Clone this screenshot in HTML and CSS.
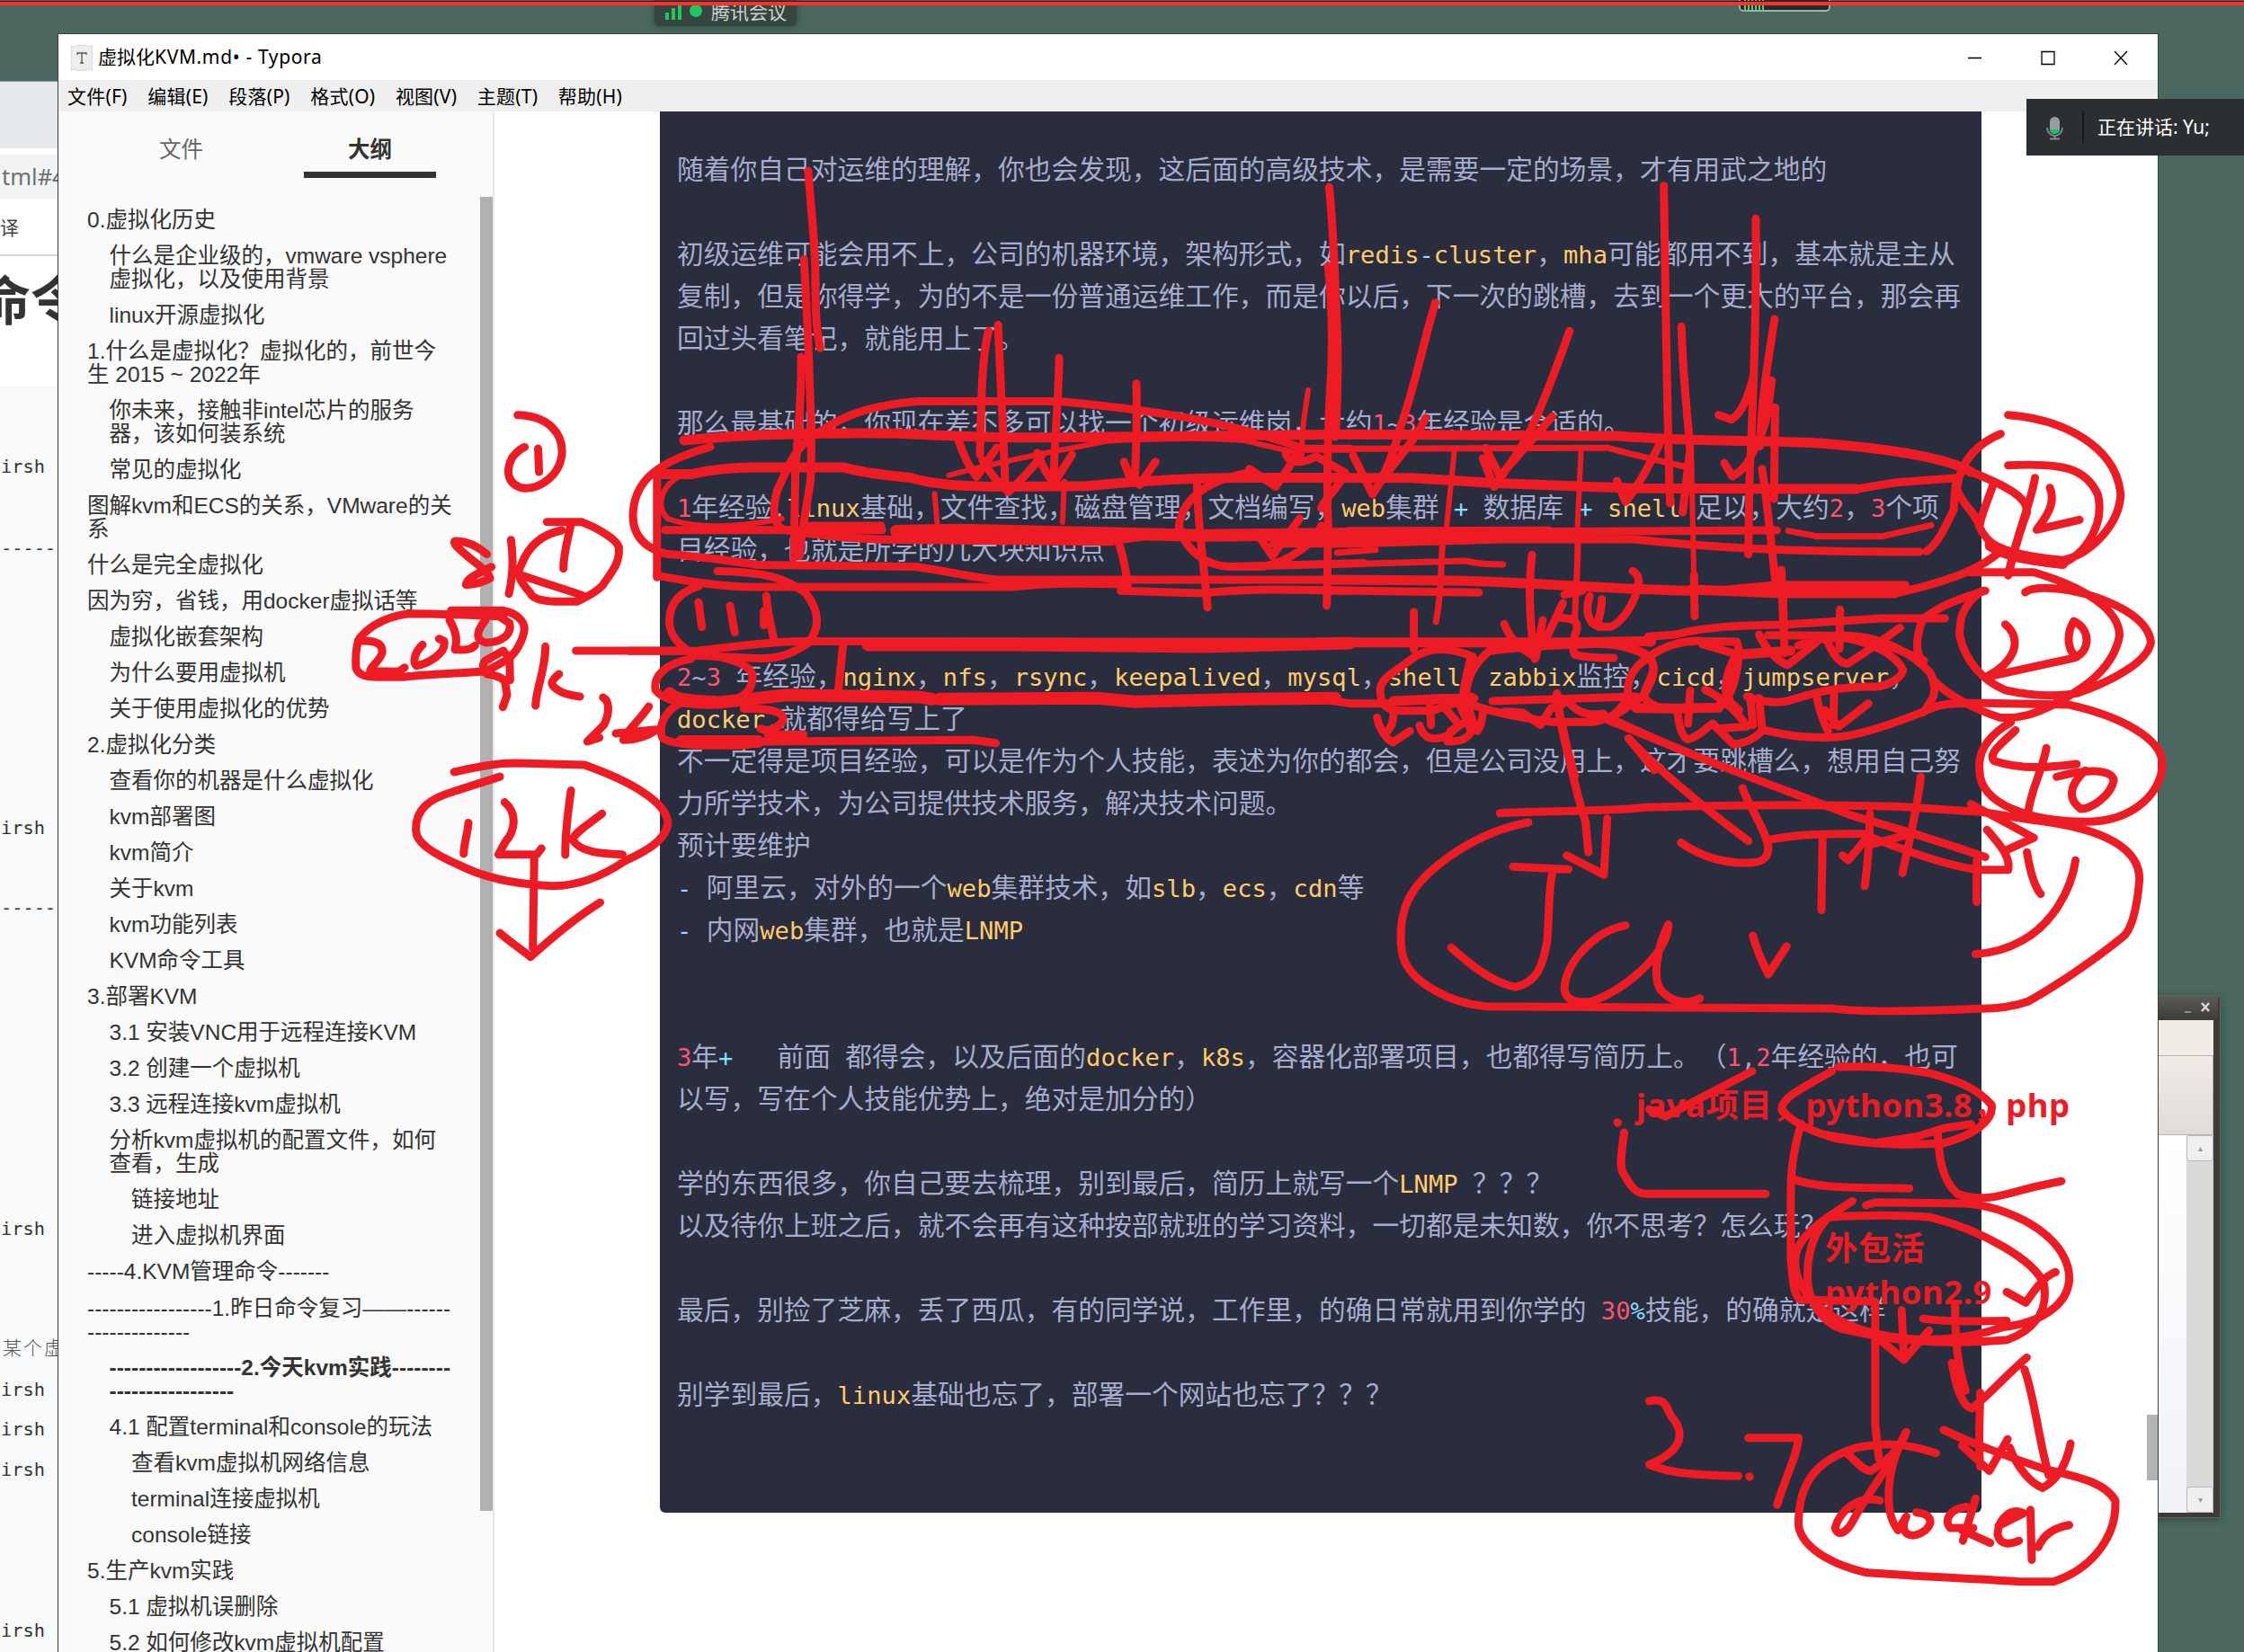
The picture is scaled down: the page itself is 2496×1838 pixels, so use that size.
FILE: index.html
```html
<!DOCTYPE html>
<html lang="zh-CN">
<head>
<meta charset="utf-8">
<title>虚拟化KVM.md - Typora</title>
<link rel="stylesheet" href="styles.css">
</head>
<body>
<div class="desktop">

  <section class="browser">
    <div class="browser-tabs"></div>
    <div class="browser-address">tml#4</div>
    <div class="browser-bookmarks">译</div>
    <div class="browser-title">命令</div>
    <div class="browser-code">
      <p>irsh</p><p>-----</p><p>irsh</p><p>-----</p><p>irsh</p><p class="note">某个虚</p><p>irsh</p><p>irsh</p><p>irsh</p><p>irsh</p>
    </div>
  </section>

  <section class="remote">
    <div class="remote-title">
      <svg width="40" height="26" viewBox="0 0 40 26"><path d="M3 18h7" stroke="#8b8a84" stroke-width="2"/><path d="M22 8l8 9M30 8l-8 9" stroke="#dad8d0" stroke-width="2.6"/></svg>
    </div>
    <div class="remote-body">
      <div class="remote-menu"></div>
      <div class="remote-tools"></div>
      <div class="remote-view">
        <div class="remote-page"></div>
        <div class="remote-scroll"><span class="step">▴</span><span class="step">▾</span></div>
      </div>
    </div>
  </section>

  <section class="typora">
    <header class="titlebar">
      <svg class="app-icon" width="28" height="36" viewBox="0 0 28 36"><path d="M2 5l4 1 4-2 4 1 4-1 4 2 4-1-1 5 1 5-1 4 1 4-1 4 1 5-4-1-4 2-4-1-4 1-4-2-4 1 1-5-1-4 1-4-1-4 1-5z" fill="#eee" stroke="#d8d8d8"/><path d="M9 15v-2h10v2M14 13v11M12 24h4" fill="none" stroke="#555" stroke-width="1.3"/></svg>
      <span class="doc-name">虚拟化<span class="latin">KVM.md• - Typora</span></span>
      <svg class="controls" width="180" height="18" viewBox="0 0 180 18" fill="none" stroke="#000" stroke-width="1.3"><path d="M1 9.5h15M83 2.5h14v14h-14zM164 2l14 15M178 2l-14 15"/></svg>
    </header>
    <nav class="menubar"><span>文件(F)</span><span>编辑(E)</span><span>段落(P)</span><span>格式(O)</span><span>视图(V)</span><span>主题(T)</span><span>帮助(H)</span></nav>
    <div class="workspace">
      <aside class="sidebar">
        <div class="tabs"><span>文件</span><span class="active">大纲</span></div>
        <div class="outline-scroll">
          <ul class="outline">
            <li>0.虚拟化历史</li>
            <li class="l2">什么是企业级的，vmware vsphere<br>虚拟化，以及使用背景</li>
            <li class="l2">linux开源虚拟化</li>
            <li>1.什么是虚拟化？虚拟化的，前世今<br>生 2015 ~ 2022年</li>
            <li class="l2">你未来，接触非intel芯片的服务<br>器，该如何装系统</li>
            <li class="l2">常见的虚拟化</li>
            <li>图解kvm和ECS的关系，VMware的关<br>系</li>
            <li>什么是完全虚拟化</li>
            <li>因为穷，省钱，用docker虚拟话等</li>
            <li class="l2">虚拟化嵌套架构</li>
            <li class="l2">为什么要用虚拟机</li>
            <li class="l2">关于使用虚拟化的优势</li>
            <li>2.虚拟化分类</li>
            <li class="l2">查看你的机器是什么虚拟化</li>
            <li class="l2">kvm部署图</li>
            <li class="l2">kvm简介</li>
            <li class="l2">关于kvm</li>
            <li class="l2">kvm功能列表</li>
            <li class="l2">KVM命令工具</li>
            <li>3.部署KVM</li>
            <li class="l2">3.1 安装VNC用于远程连接KVM</li>
            <li class="l2">3.2 创建一个虚拟机</li>
            <li class="l2">3.3 远程连接kvm虚拟机</li>
            <li class="l2">分析kvm虚拟机的配置文件，如何<br>查看，生成</li>
            <li class="l3">链接地址</li>
            <li class="l3">进入虚拟机界面</li>
            <li>-----4.KVM管理命令-------</li>
            <li>-----------------1.昨日命令复习——------<br>--------------</li>
            <li class="l2 current">------------------2.今天kvm实践--------<br>-----------------</li>
            <li class="l2">4.1 配置terminal和console的玩法</li>
            <li class="l3">查看kvm虚拟机网络信息</li>
            <li class="l3">terminal连接虚拟机</li>
            <li class="l3">console链接</li>
            <li>5.生产kvm实践</li>
            <li class="l2">5.1 虚拟机误删除</li>
            <li class="l2">5.2 如何修改kvm虚拟机配置</li>
          </ul>
          <div class="outline-thumb"></div>
        </div>
      </aside>
      <main class="editor">
        <pre class="code">随着你自己对运维的理解，你也会发现，这后面的高级技术，是需要一定的场景，才有用武之地的

初级运维可能会用不上，公司的机器环境，架构形式，如<b>redis</b><u>-</u><b>cluster</b>，<b>mha</b>可能都用不到，基本就是主从
复制，但是你得学，为的不是一份普通运维工作，而是你以后，下一次的跳槽，去到一个更大的平台，那会再
回过头看笔记，就能用上了。

那么最基础的，你现在差不多可以找一个初级运维岗，大约<i>1</i><s>~</s><i>3</i>年经验是合适的。

<i>1</i>年经验<s>,</s><b>linux</b>基础，文件查找，磁盘管理，文档编写，<b>web</b>集群<u> + </u>数据库<u> + </u><b>shell </b>足以，大约<i>2</i>，<i>3</i>个项
目经验，也就是所学的几大块知识点


<i>2</i><s>~</s><i>3 </i>年经验，<b>nginx</b>，<b>nfs</b>，<b>rsync</b>，<b>keepalived</b>，<b>mysql</b>，<b>shell</b>，<b>zabbix</b>监控，<b>cicd</b>，<b>jumpserver</b>，
<b>docker</b><s>,</s>就都得给写上了
不一定得是项目经验，可以是作为个人技能，表述为你的都会，但是公司没用上，这才要跳槽么，想用自己努
力所学技术，为公司提供技术服务，解决技术问题。
预计要维护
<u>- </u>阿里云，对外的一个<b>web</b>集群技术，如<b>slb</b>，<b>ecs</b>，<b>cdn</b>等
<u>- </u>内网<b>web</b>集群，也就是<b>LNMP</b>


<i>3</i>年<u>+   </u>前面<s> </s>都得会，以及后面的<b>docker</b>，<b>k8s</b>，容器化部署项目，也都得写简历上。（<i>1</i><s>,</s><i>2</i>年经验的，也可
以写，写在个人技能优势上，绝对是加分的）

学的东西很多，你自己要去梳理，别到最后，简历上就写一个<b>LNMP </b>？？？
以及待你上班之后，就不会再有这种按部就班的学习资料，一切都是未知数，你不思考？怎么玩？

最后，别捡了芝麻，丢了西瓜，有的同学说，工作里，的确日常就用到你学的<s> </s><i>30</i><u>%</u>技能，的确就是这样

别学到最后，<b>linux</b>基础也忘了，部署一个网站也忘了？？？</pre>
        <div class="editor-thumb"></div>
      </main>
    </div>
  </section>

  <div class="meeting">
    <svg width="52" height="24" viewBox="0 0 52 24" fill="#22c55e"><path d="M1 14h4v8H1zM8 9h4v13H8zM15 4h4v18h-4z"/><circle cx="35" cy="12" r="7"/></svg>
    <span>腾讯会议</span>
  </div>
  <div class="level"></div>
  <div class="share-line"></div>

  <div class="speaker">
    <svg width="26" height="42" viewBox="0 0 26 42"><rect x="8" y="9" width="11" height="19" rx="5.5" fill="#999c9f"/><path d="M8 23h11a5.5 5 0 0 1-11 0z" fill="#12c463"/><path d="M5 21a8.500 9 0 0 0 17 0M13.500 30v3M8 33.500h11" fill="none" stroke="#85898c" stroke-width="1.800"/></svg>
    <span class="rule"></span>
    <span class="who">正在讲话: Yu;</span>
  </div>

  <div class="ink-note note-top">java项目，python3.8，php</div>
  <div class="ink-note note-low">外包活<br>python2.9</div>

  <svg class="ink" viewBox="0 0 2496 1838">
    <g transform="scale(.53061 .39541)">
      <path d="M1085 1168C1150 1170 1180 1220 1178 1275C1175 1340 1130 1375 1100 1374C1060 1365 1060 1320 1075 1285Q1090 1262 1100 1258M1128 1262L1130 1328"/>
    </g>
    <g transform="translate(360 560) scale(.33333)">
      <path d="M545 170C510 140 470 125 438 126C430 135 450 150 490 185C530 215 550 235 555 250C530 265 500 270 475 272C475 255 500 240 560 212M625 122C635 190 630 250 618 302"/>
      <path d="M745 62L860 62C920 85 975 120 985 145C990 200 960 230 930 275C900 305 870 315 845 328L770 328C720 325 695 315 690 300C655 260 640 235 660 205C680 150 720 105 795 90M660 240C730 265 800 285 865 308M825 70C815 120 800 170 800 218"/>
      <path d="M425 358L600 358C640 365 670 390 670 420C665 460 640 500 615 520L545 560C450 568 350 570 265 580L190 580C150 578 120 580 108 550C105 500 110 470 120 450C160 400 230 372 290 368C400 368 520 375 600 378M430 370L600 362"/>
      <path d="M115 458C160 458 200 460 195 500C185 530 155 545 155 560L250 562L270 548M330 472C305 495 295 530 310 542C350 535 410 500 402 460L385 452M420 390C445 430 445 465 438 488C470 490 490 490 505 475M540 390C515 420 500 455 540 465C590 465 630 440 620 400L590 380"/>
      <path d="M600 492L540 525C525 540 535 560 545 570C580 575 600 585 605 595L612 640L598 680M620 510L622 590M600 495L620 515M740 478C740 560 710 610 707 675M785 570C755 595 755 605 780 622C800 638 830 642 855 645M842 492L1190 492"/>
      <path d="M932 648C955 660 955 700 935 740L880 795L920 782M1085 678C1050 730 1010 760 1000 790C1040 790 1090 775 1110 755L975 768"/>
    </g>
    <g transform="translate(0 600) scale(.53061 .39541)">
      <path d="M952 655C1000 640 1050 630 1080 630L1225 635C1320 680 1400 740 1400 800C1395 850 1350 880 1310 905C1250 960 1200 978 1150 975C1080 970 1010 950 960 915C900 880 872 850 872 820C870 760 900 730 950 710L1048 668"/>
      <path d="M982 798C980 830 972 860 972 885M1058 740C1085 770 1080 820 1060 850L1045 887L1125 887L1135 870M1197 707C1190 770 1185 840 1185 888M1262 772C1235 800 1205 825 1200 845C1215 880 1260 885 1305 887M1120 895L1117 1150M1048 1108C1075 1140 1100 1160 1112 1175C1150 1130 1200 1070 1258 1022"/>
    </g>
    <g transform="translate(700 150) scale(.53061 .39541)">
      <path d="M375 102C380 200 388 280 390 380C390 460 390 540 400 600M366 350C370 450 375 550 378 700C382 800 382 900 380 970C372 1050 362 1100 357 1185M360 625C362 750 352 850 348 950L345 1190"/>
      <path d="M753 552C740 620 738 720 735 900M773 535C778 700 785 850 788 990M690 860C700 900 715 940 728 962L770 880M740 915C760 960 780 990 795 1005C830 960 850 930 865 900M901 628C900 750 890 870 890 970M855 895C865 930 880 965 890 980L928 900M1063 700C1065 800 1062 900 1060 960M1037 920L1048 960L1070 985L1103 920"/>
      <path class="fine" d="M1423 718C1418 770 1410 820 1410 870M100 965C60 1000 60 1050 80 1080C140 1110 230 1105 320 1080M640 1010L645 1090M912 975L908 1090M1485 1175L1560 1168"/>
      <path d="M1467 147C1475 250 1480 400 1485 600C1485 700 1485 760 1480 850M1465 370C1475 500 1475 620 1468 740C1465 850 1460 950 1465 1100L1462 1325"/>
      <path class="wide" d="M115 860C250 840 400 838 560 840C700 850 800 855 1000 850L1510 843M58 955L130 955C180 940 220 935 270 936L450 936C500 955 560 960 590 965C640 985 700 988 760 990L960 988C1100 970 1200 965 1300 965L1510 965"/>
      <path d="M170 878C60 920 20 970 10 1040C0 1110 20 1160 80 1180C180 1190 220 1200 270 1210L600 1215C680 1230 730 1250 780 1252L1510 1252M58 1245L58 955"/>
      <path d="M605 750C520 760 460 780 400 835C340 880 330 950 310 1000C300 1050 300 1090 320 1110C400 1130 500 1140 600 1140L1010 1145C1060 1130 1100 1125 1200 1125L1510 1125"/>
      <path d="M605 750L900 750C1100 775 1200 800 1300 835C1350 855 1390 870 1410 883L1510 883"/>
      <path class="fine" d="M670 958C800 910 900 890 1000 862C1150 850 1250 855 1290 860C1350 880 1390 890 1410 900"/>
      <path d="M75 1112L530 1112M370 1100L528 1100M58 1240C120 1255 180 1270 250 1272L800 1272C900 1260 960 1262 1045 1265C1040 1220 1035 1180 1025 1145M1030 1283L1200 1290C1300 1275 1400 1280 1510 1283M1190 965C1190 1100 1205 1200 1212 1330"/>
      <path class="bold" d="M560 1115L700 1112L1200 1127L1510 1123M500 1435L800 1435L1200 1440L1510 1430"/>
      <path d="M1300 950C1200 975 1160 1030 1152 1100C1165 1170 1210 1215 1260 1215L1330 1215C1380 1200 1440 1150 1450 1100M1260 1215L1540 1205M1300 940L1355 990L1400 900M1320 1130L1348 1185L1405 1080M1375 890C1380 930 1410 925 1440 905L1500 950C1490 990 1460 1020 1450 1050M1350 1150L1510 1150"/>
      <path d="M185 1228C290 1230 330 1250 370 1290C400 1340 400 1390 375 1430C330 1470 300 1475 270 1473L140 1465C90 1430 80 1390 85 1350C90 1310 110 1285 145 1270M145 1315L152 1385M211 1325L221 1400M287 1297C290 1350 300 1400 303 1420M282 1340L282 1380M0 1452L140 1452C220 1440 300 1425 360 1425L1510 1427"/>
    </g>
    <g transform="translate(700 700) scale(.53061 .35714)">
      <path d="M130 92C70 110 50 150 55 190C70 220 120 240 180 235C250 220 260 180 258 140C250 110 220 95 170 80M448 50L437 205M105 232C70 260 60 310 70 340C100 365 160 362 240 362L280 350L720 345L768 355M240 248C310 245 330 265 320 290C305 315 290 320 275 310M290 328L365 328"/>
      <path class="bold" d="M85 200C95 220 130 225 190 228L330 205L610 212L635 218M650 218L980 215L1060 226L1300 218L1480 215M110 350L270 350"/>
    </g>
    <g transform="translate(1500 150) scale(.63520 .33333)">
      <path d="M552 170C555 500 557 900 563 1230M713 280C715 600 708 900 702 1150L700 1400M583 640C585 800 592 900 598 1050L585 1260M746 615C735 750 725 850 720 1040M741 820C735 900 735 960 715 1030C700 1100 690 1120 672 1140L658 1095M710 800C700 870 690 930 670 950L648 935M747 910L745 1215M724 1115C735 1250 742 1400 748 1500"/>
      <path d="M152 560C130 700 115 850 90 980C80 1060 60 1150 42 1200L8 1070M135 945C115 1030 70 1110 42 1200M387 655C360 800 340 900 320 980C300 1060 270 1130 255 1175L235 1080M357 940L265 1140L240 1045M545 1030C520 1130 500 1190 485 1225L470 1155"/>
      <path class="wide" d="M0 1000L470 1005C600 1025 750 1020 830 1030C960 1050 1050 1080 1090 1125M0 1145L110 1145L250 1162L500 1180L890 1182"/>
      <path d="M1090 1125C1150 1170 1190 1210 1188 1260C1170 1350 1165 1400 1155 1470M890 1182L960 1160L1065 1145M0 1365L260 1350L500 1350C650 1380 750 1390 1000 1392M1065 1145C1060 1210 1060 1230 1060 1250C1045 1310 1030 1370 1012 1390"/>
      <path class="mid" d="M0 1048L455 1045C500 1070 550 1090 595 1110M770 1322L820 1340L935 1340L1020 1303"/>
      <path class="fine" d="M185 1060L170 1340M407 1060L400 1340M600 1050L605 1500"/>
      <path class="bold" d="M0 1330L350 1328M1125 1370C1150 1400 1180 1412 1250 1428"/>
      <path d="M300 1325L750 1320M1142 998C1090 1040 1070 1110 1065 1180C1075 1240 1100 1260 1105 1310C1120 1370 1150 1395 1170 1410L1250 1420C1300 1400 1350 1300 1352 1200C1345 1050 1260 950 1155 935M1155 1103C1250 1095 1290 1110 1312 1200C1325 1300 1290 1400 1250 1430C1200 1430 1160 1410 1125 1370M1130 1160C1120 1220 1105 1280 1105 1310M1202 1145C1195 1230 1170 1330 1155 1470M1228 1178C1240 1230 1220 1280 1205 1318L1280 1285"/>
    </g>
    <g transform="translate(1480 600) scale(.33333)">
      <path d="M0 15L560 0M0 170L495 178M780 185L840 172M672 52C660 150 660 250 682 400M580 283C590 315 610 340 640 365L685 395L708 270M775 213L720 330M765 262C810 265 825 270 822 300C810 330 805 370 815 385C850 397 900 395 945 396M865 190C850 230 855 280 895 292L935 292C975 275 1020 210 1028 140C1028 120 1015 110 1008 106M905 200C905 235 895 260 890 290M278 243L278 368"/>
      <path d="M475 392C400 360 330 355 270 400C220 440 170 460 166 500C165 550 180 570 235 572L340 572C380 560 410 545 480 530M540 372C620 360 750 355 850 350C960 345 1040 365 1070 400C1090 440 1070 480 1045 520C1000 550 970 590 875 610L740 610C640 595 560 585 450 545M450 530C455 470 470 420 535 368M540 540L1020 525M0 538L65 548L200 548"/>
      <path d="M155 595C165 640 190 670 208 678L265 640M210 580C210 610 200 630 190 640M332 550L335 620M297 622C310 665 340 675 390 655L430 620L375 555M430 550L470 640C455 670 430 675 390 675L400 640L450 610M460 560C475 610 480 630 490 640C505 620 505 600 508 580"/>
      <path d="M580 575L640 578L700 620L735 565L775 550M755 515C760 580 775 620 790 700L815 790M800 550C830 580 860 590 910 582M930 605L1200 715M995 665L1080 770"/>
      <path class="wide" d="M0 135L420 138C700 145 900 165 1200 172M210 540L470 528M0 344L800 344L1070 340M470 400C460 440 445 490 445 540"/>
      <path class="mid" d="M22 45L150 35M0 85L450 72C490 82 520 84 575 84M375 0C365 100 375 150 352 275M825 0C825 100 818 180 815 260"/>
    </g>
    <g transform="translate(1500 600) scale(.63520 .35714)">
      <path class="wide" d="M600 157L760 168L955 168"/>
      <path d="M955 170C1030 140 1060 120 1085 100C1110 80 1130 55 1140 40M640 160L750 142L975 142M605 110L606 240M758 95L762 300"/>
      <path d="M1085 103L1200 103C1290 150 1350 220 1350 300C1340 400 1290 460 1250 500C1200 550 1170 560 1140 555C1080 520 1040 470 1025 440M1005 380C990 350 995 300 1005 250C1040 200 1080 180 1115 160M1110 160C1070 210 1070 260 1070 300C1080 380 1110 440 1150 470C1200 490 1240 490 1275 480C1340 440 1400 380 1405 320C1400 240 1330 190 1290 170C1250 150 1200 145 1185 165"/>
      <path d="M1150 265C1180 310 1170 380 1115 430L1270 370C1300 350 1300 280 1270 255C1255 300 1260 350 1275 365"/>
      <path d="M365 480L370 560C385 680 400 800 415 880L420 975M382 985L447 1045L453 870M450 550C600 680 750 770 880 860C960 900 1050 950 1115 990M490 620C560 750 640 860 700 940M865 985L875 1000L910 925C960 960 1050 1020 1105 1030L1155 1030C1160 990 1140 950 1118 905M915 950L990 915"/>
      <path d="M740 935C800 915 850 918 905 918M830 935L828 1155M913 855C912 950 908 1030 904 1080M1002 740C995 850 980 950 970 1040M690 775C700 830 730 900 735 960C735 1000 720 1008 700 1008C650 1010 610 980 582 945"/>
      <path d="M265 853C400 845 480 845 520 835C650 828 800 825 960 832L1110 850L1200 875C1320 900 1385 960 1385 1060C1380 1160 1370 1220 1355 1240C1300 1320 1230 1400 1190 1440C1150 1465 1110 1462 1100 1462C1000 1470 900 1475 850 1462L240 1455C180 1445 100 1380 93 1280C85 1150 110 1080 160 1010C210 940 260 900 315 882"/>
      <path d="M288 1020L385 1028M358 1030C350 1080 352 1150 348 1250C340 1330 330 1380 292 1395C250 1380 210 1320 180 1272M485 1203C430 1220 380 1320 378 1400C380 1440 400 1445 425 1440C480 1410 560 1290 560 1200C540 1270 530 1380 550 1410C570 1450 600 1445 615 1430M708 1235C715 1280 725 1320 735 1355L767 1268"/>
      <path d="M1273 1000C1265 1100 1230 1200 1180 1250C1150 1280 1120 1290 1098 1292M1188 975C1193 1030 1200 1080 1212 1105M1100 1000L1100 1130M1090 825L1200 930L1150 970M1005 540C1030 510 1060 510 1110 510L1260 515C1350 550 1425 620 1425 700C1425 780 1380 880 1290 880C1200 880 1105 830 1105 720C1100 650 1130 600 1160 570"/>
      <path d="M1168 595C1140 640 1120 670 1130 690C1180 720 1230 710 1275 700M1222 650C1215 720 1195 780 1190 850M1240 740C1290 715 1335 715 1340 750C1335 800 1300 840 1282 840C1260 810 1260 770 1290 720"/>
    </g>
    <g transform="translate(1800 660) scale(.33333)">
      <path d="M0 160L110 165M100 145L190 138C300 110 400 108 550 105L880 84L1090 84M0 175C50 185 110 205 118 245C115 290 80 320 88 350C120 385 150 385 190 382M100 215C60 240 30 280 32 330C30 370 0 390 -20 410M100 215C150 175 220 155 285 160L395 162L405 195M280 170L400 205"/>
      <path d="M460 190C440 300 370 200 370 350"  stroke="none"/>
      <path d="M500 140L760 142C900 145 1000 220 1040 265C1060 300 1060 340 1040 365L1020 395C920 435 800 475 730 480C620 485 560 475 480 455L470 350M430 345C480 365 540 370 580 355C650 335 720 310 860 312C900 310 950 280 950 255C930 215 870 170 760 150C700 145 640 160 600 175M880 165L1020 225"/>
      <path d="M550 20L555 200M470 138C490 180 520 220 565 240L660 165M740 55L738 185M700 165C715 200 735 235 765 235C800 215 870 165 940 115M240 325L233 435M197 385C200 440 215 485 233 488C270 480 290 450 315 435L385 505C430 500 460 480 480 460M290 322C350 350 400 400 430 445L330 452M440 345L450 440M720 335L718 440M660 335C670 390 690 440 700 460M690 390L735 445L835 368"/>
      <path class="wide" d="M60 383L190 385L335 382M405 205L575 192M395 210C360 270 350 330 375 370L400 390M0 0M335 380C380 340 390 280 400 210"/>
    </g>
    <g transform="translate(1700 1100) scale(.50765 .47066)">
      <path d="M195 316L196 317M210 340C205 380 200 410 205 430C225 470 235 485 260 485L520 485M490 195L300 302L265 285M665 195C590 240 555 260 555 285C570 310 620 340 680 355C760 370 850 370 910 365C980 345 1020 310 1015 275C980 230 930 215 880 200C800 185 750 183 680 185M650 345L760 365L850 350L910 330L970 320"/>
      <path d="M598 320C580 380 575 440 575 480L575 640C580 690 580 720 595 735L760 740L760 1030L768 1110M700 1100C720 1120 735 1140 750 1140C780 1120 800 1100 810 1085M580 450C640 475 740 470 835 472M897 340C900 400 905 450 940 485C1000 510 1060 480 1110 468L1168 455"/>
      <path d="M740 512L760 505L960 508C1080 520 1190 600 1185 690C1180 750 1120 790 1040 800C960 830 860 840 760 815C660 790 580 720 585 640C585 590 640 550 710 502M655 540C740 535 820 535 880 540C990 570 1110 640 1130 700C1140 770 1100 810 1050 830C950 840 850 835 780 825L690 805C640 790 610 730 612 680C610 620 630 570 655 545M1048 717L1090 742C1110 710 1130 680 1155 670M865 780C930 790 1000 785 1048 785"/>
      <path d="M818 760L822 855M770 830L823 877L878 808M935 745C935 830 940 890 958 950M928 885C935 930 950 990 972 992C1010 960 1050 910 1092 872M1087 900C1110 970 1115 1050 1140 1150M990 955C990 1000 985 1060 990 1130M950 1080L1010 1140L1050 1065M1055 1085C1070 1130 1100 1170 1127 1180C1160 1160 1180 1120 1188 1075"/>
      <path d="M265 975C310 965 300 1000 320 1020C345 1060 330 1095 265 1125C310 1145 360 1150 460 1152M484 1153L485 1154M482 1062L592 1062C590 1100 565 1150 545 1220M893 1098C830 1075 780 1072 720 1085C640 1110 590 1160 592 1270C600 1320 660 1360 740 1380C850 1390 1000 1395 1080 1402L1150 1402C1240 1370 1290 1290 1286 1210C1260 1160 1180 1150 1130 1135C1060 1110 960 1070 910 1043"/>
      <path d="M770 1210C720 1195 680 1240 672 1275C680 1300 700 1280 710 1260C750 1180 800 1120 828 1048C780 1140 780 1240 810 1280L828 1248C810 1290 840 1305 870 1280C890 1260 880 1240 850 1238M960 1225C920 1230 910 1260 925 1275L975 1275M980 1205L952 1305M950 1280L1012 1310M1030 1270L1085 1240C1060 1225 1030 1250 1028 1290C1035 1320 1060 1312 1075 1305M1100 1232L1103 1350M1117 1320C1130 1290 1150 1275 1185 1268"/>
    </g>
  </svg>
</div>
</body>
</html>
```

FILE: styles.css
```css
* { box-sizing: border-box; }

body {
  margin: 0;
  font-family: "Noto Sans", "Noto Sans CJK SC", sans-serif;
  text-spacing-trim: space-all;
}

.desktop {
  position: relative;
  width: 2496px;
  height: 1838px;
  overflow: hidden;
  background: #4a685f;
}

/* browser window behind the editor */
.browser {
  position: absolute;
  left: 0;
  top: 90px;
  width: 70px;
  height: 1748px;
  overflow: hidden;
  background: #fff;
  border-top: 1px solid #8c9a96;
  white-space: nowrap;
}
.browser-tabs { height: 74px; background: #e6eaed; }
.browser-address {
  height: 49px;
  margin-top: 7px;
  padding-left: 2px;
  background: #f1f3f4;
  color: #6d7175;
  font-size: 25.5px;
  line-height: 48px;
}
.browser-bookmarks {
  height: 64px;
  border-bottom: 2px solid #d6d8da;
  color: #444;
  font-size: 21px;
  line-height: 64px;
}
.browser-title {
  height: 144px;
  margin-left: -24px;
  color: #333;
  font-size: 58px;
  font-weight: 700;
  line-height: 98px;
}
.browser-code {
  height: 1410px;
  padding-top: 75px;
  background: #f7f9fb;
  color: #333;
  font-family: "DejaVu Sans Mono", "Noto Sans CJK SC", monospace;
  font-size: 20.3px;
  line-height: 30px;
}
.browser-code p { height: 30px; margin: 0; padding-left: 1px; }
.browser-code p:nth-child(2) { margin-top: 61px; }
.browser-code p:nth-child(3) { margin-top: 281px; }
.browser-code p:nth-child(4) { margin-top: 59px; }
.browser-code p:nth-child(5) { margin-top: 327px; }
.browser-code p:nth-child(6) { margin-top: 103px; }
.browser-code p:nth-child(7) { margin-top: 16px; }
.browser-code p:nth-child(8) { margin-top: 14px; }
.browser-code p:nth-child(9) { margin-top: 15px; }
.browser-code p:nth-child(10) { margin-top: 149px; }
.browser-code .note { padding-left: 3px; color: #555; font-size: 21px; letter-spacing: 2px; font-weight: 300; }

/* remote viewer window */
.remote {
  position: absolute;
  left: 2380px;
  top: 1107px;
  width: 90px;
  height: 582px;
  padding: 0 7px 6px 0;
  background: #3c3b37;
  border: 1px solid #64645f;
  border-radius: 0 6px 0 0;
  box-shadow: 0 2px 8px rgba(0, 0, 0, .3);
}
.remote-title {
  display: flex;
  justify-content: flex-end;
  height: 27px;
  margin-right: -5px;
  background: linear-gradient(#5d5c57, #3c3b37);
}
.remote-body { display: flex; flex-direction: column; height: 548px; }
.remote-menu { height: 39px; background: #efece6; }
.remote-tools { height: 89px; background: linear-gradient(#efece8, #dfdcd8); border: 1px solid #b9b6b1; }
.remote-view { display: flex; flex: 1; background: #fff; }
.remote-page { flex: 1; background: linear-gradient(#fff, #f1f2f8); }
.remote-scroll {
  display: flex;
  flex-direction: column;
  justify-content: space-between;
  width: 30px;
  background: #dcdad8;
}
.step {
  height: 29px;
  background: #efefef;
  border: 1px solid #bbb;
  border-radius: 3px;
  color: #999;
  font-size: 10px;
  line-height: 27px;
  text-align: center;
}

/* editor window */
.typora {
  position: absolute;
  left: 64px;
  top: 37px;
  display: flex;
  flex-direction: column;
  width: 2337px;
  height: 1801px;
  border: 1px solid #34433e;
  border-bottom: 0;
  background: #fff;
}
.titlebar {
  display: flex;
  align-items: center;
  height: 51px;
  padding: 0 32px 0 12px;
  font-size: 21px;
}
.doc-name { margin: -3px 0 0 4px; }
.latin { letter-spacing: .65px; }
.controls { margin-left: auto; }
.menubar {
  display: flex;
  gap: 22.6px;
  align-items: center;
  height: 35px;
  padding: 0 0 2px 10px;
  background: #efefef;
  font-size: 21px;
}
.menubar span { letter-spacing: .22px; }
.workspace { display: flex; flex: 1; min-height: 0; }

.sidebar {
  width: 485px;
  border-right: 2px solid #e8e8e8;
  background: #fafafa;
  color: #333;
  font-family: "Liberation Sans", "Noto Sans CJK SC", sans-serif;
  font-size: 24.5px;
}
.tabs { display: flex; height: 95px; padding: 10px 63px 0; justify-content: space-between; }
.tabs span {
  width: 147px;
  height: 64px;
  color: #666;
  line-height: 66px;
  text-align: center;
}
.tabs .active { color: #333; font-weight: 700; border-bottom: 7px solid #333; }
.outline-scroll { display: flex; height: 1619px; overflow: hidden; }
.outline {
  flex: 1;
  margin: 0;
  padding: 5.5px 0 0 32px;
  list-style: none;
  line-height: 26.03px;
  white-space: nowrap;
}
.outline li { padding: 7px 0; }
.outline .l2 { padding-left: 24.5px; }
.outline .l3 { padding-left: 49px; }
.outline .current { font-weight: 700; }
.outline-thumb { width: 14px; height: 1462px; background: #b0b0b0; }

.editor { display: flex; flex: 1; align-items: flex-start; }
.code {
  width: 1470px;
  height: 1559px;
  margin: 0 0 0 184px;
  padding: 39px 0 0 19px;
  border-radius: 0 0 6px 6px;
  background: #2a2d3e;
  color: #a6accd;
  font-family: "Noto Sans CJK SC", sans-serif;
  font-size: 29.75px;
  line-height: 47.02px;
}
.code b, .code i, .code u, .code s {
  font-family: "DejaVu Sans Mono", monospace;
  font-size: 27.15px;
  font-style: normal;
  font-weight: 400;
  line-height: 1;
  text-decoration: none;
}
.code b { color: #ffcb6b; }
.code i { color: #ff5370; }
.code u { color: #89ddff; }
.editor-thumb { width: 12px; height: 73px; margin: 1450px 0 0 auto; background: #b3b3b3; }

/* screen-sharing overlays */
.meeting {
  position: absolute;
  left: 728px;
  top: -6px;
  display: flex;
  align-items: center;
  width: 158px;
  height: 35px;
  padding: 0 0 0 11px;
  border-radius: 5px;
  background: #35463f;
  box-shadow: 0 0 8px rgba(0, 0, 0, .35);
  color: #ccd3d0;
  font-size: 21px;
}
.level {
  position: absolute;
  left: 1934px;
  top: -8px;
  width: 102px;
  height: 21px;
  border: 2px solid #9dafa8;
  border-radius: 5px;
  background: repeating-linear-gradient(90deg, #4fd06a 0 2px, #1f2e28 2px 4px) 4px 0 / 22px 100% no-repeat #1f2e28;
}
.share-line {
  position: absolute;
  left: 0;
  top: 1px;
  width: 100%;
  height: 5px;
  border-top: 1px solid #3b1917;
  background: #ff302b;
}
.speaker {
  position: absolute;
  left: 2254px;
  top: 110px;
  display: flex;
  align-items: center;
  width: 242px;
  height: 63px;
  padding-left: 18px;
  background: #2b2f32;
  color: #fff;
  font-size: 21px;
}
.speaker .rule { width: 2px; height: 35px; margin: 0 15px 0 18px; background: #17191b; }
.speaker .who { margin-top: -3px; }

/* pen annotations */
.ink-note {
  position: absolute;
  color: #ed1c24;
  font-size: 36.5px;
  font-weight: 700;
  line-height: 49px;
  white-space: nowrap;
}
.note-top { left: 1820px; top: 1205px; letter-spacing: .5px; }
.note-low { left: 2030px; top: 1364px; letter-spacing: .5px; }
.ink {
  position: absolute;
  left: 0;
  top: 0;
  width: 2496px;
  height: 1838px;
  fill: none;
  stroke: #ed1c24;
  stroke-width: 9px;
  stroke-linecap: round;
  stroke-linejoin: round;
}
.ink path { vector-effect: non-scaling-stroke; }
.ink .fine { stroke-width: 6px; }
.ink .mid { stroke-width: 7px; }
.ink .wide { stroke-width: 11px; }
.ink .bold { stroke-width: 14px; }
```
